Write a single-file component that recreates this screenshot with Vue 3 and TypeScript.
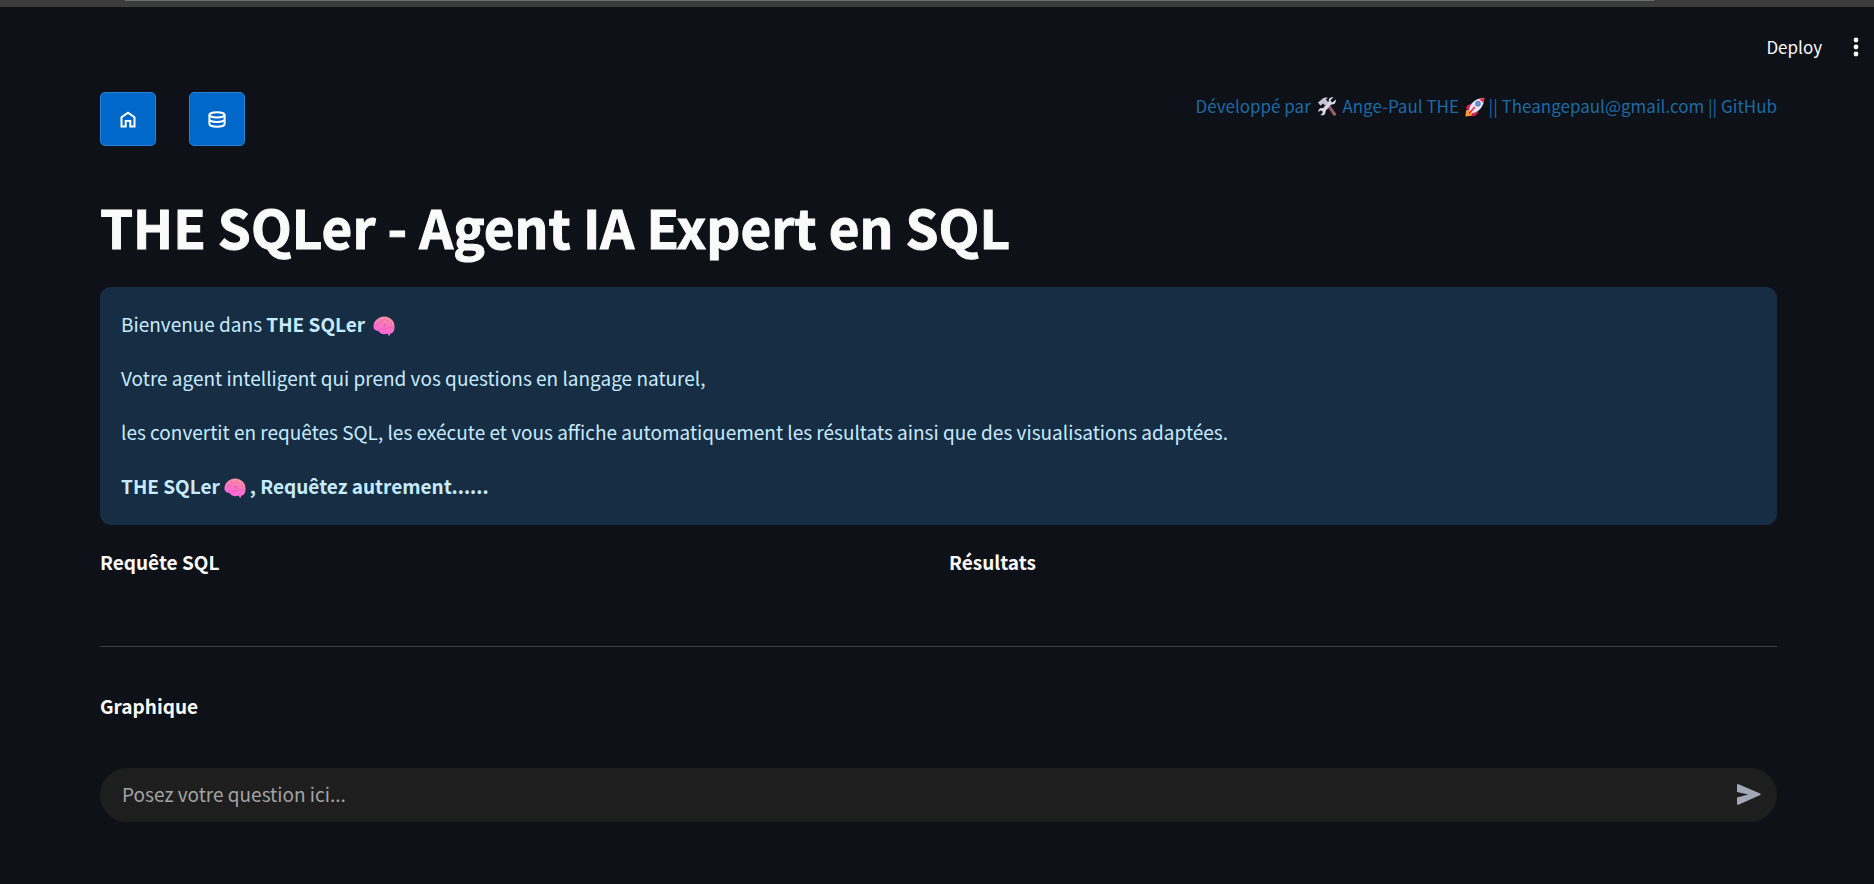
<script setup lang="ts">
import { ref } from 'vue'

const question = ref('')
</script>

<template>
  <div class="app">
    <svg class="defs" aria-hidden="true">
      <defs>
        <linearGradient id="brain-fill" x1="0.7" y1="0" x2="0.4" y2="1">
          <stop offset="0" stop-color="#ff9a9e" />
          <stop offset="0.55" stop-color="#fb72c6" />
          <stop offset="1" stop-color="#ff63e6" />
        </linearGradient>
        <linearGradient id="handle-fill" x1="0" y1="0" x2="1" y2="1">
          <stop offset="0" stop-color="#7c4f72" />
          <stop offset="1" stop-color="#a4645a" />
        </linearGradient>
        <symbol id="brain" viewBox="0 0 22 20">
          <path d="M.6 11.500C0 8 1.800 4.200 5 2.500 8 .2 12.500-.2 16 1.700c3.500 1.500 5.600 5 5.500 8.800.2 3.500-1.200 6.700-4.300 7.300l-.5 1.800c-.2.5-.8.4-1 0l-1.200-2c-3.500 1.200-7.500.4-8.900-2.600C3 15 1 13.800.6 11.500Z" fill="url(#brain-fill)" />
          <path d="M3 9c1.500-2 3.500-1 5-2.500M7 3.500c.5 1.500 2 2 3.500 1.500M12 2c-.5 2 1 3.500 3 3M10 8.500c2 1.500 4 .2 5-1M18 6c-1 1.500 0 3 1.500 3.500M5.500 14c2 .5 3-1.500 5-1s3 .2 4-1M15 11c1.500 1.500 3 1 4 0M11.500 8v3" fill="none" stroke="#d8549e" stroke-width=".6" stroke-linecap="round" />
        </symbol>
        <symbol id="tools" viewBox="0 0 20 20">
          <path d="M9 8l2.500-2L19 16.500c.8 1.400-1.200 3-2.500 2Z" fill="url(#handle-fill)" />
          <path d="M1 5.500 6.500 1l3-.7 1.300 1-2 .9 2.600 3.300-3.300 2.900L6 6.500 3.500 8.700Z" fill="#c9c4d6" />
          <path d="M18.700 2.500 15.800 5.200 14 4.800l-.4-1.700L16.400.6c-2.300-.9-5 .7-4.700 3.800L6 11.200c-2.600-.8-5 1-4.700 3.900l2.200-1.600 1.900.5.3 1.900-2.300 2c2.700 1.300 5.600-.7 5.100-4l5.700-6.500c3 .5 5.300-2 4.500-4.900Z" fill="#dcd8e8" />
        </symbol>
        <symbol id="rocket" viewBox="0 0 20 20">
          <path d="M1 13.500 5 12l3 3.500-1.500 3.200-6 .8Z" fill="#ff9b32" />
          <path d="M7 6.500 2.500 8.200C1.500 9.500 1.200 11 1.200 12.500L6 11.500ZM13.500 13l-1.200 4c-1.500 1.500-3.800 2.300-5.300 2.300l.5-5Z" fill="#d92354" />
          <path d="M4 13.500C5 6.500 9.500 1.300 19.300.7c-.2 9.500-6 14.500-12.700 15.500Z" fill="#e9e4f2" />
          <path d="M14.200 1.900 19.300.7c0 2.200-.4 4-1 5.400Z" fill="#ef2950" />
          <circle cx="13" cy="6.800" r="2.700" fill="#5d6aa8" />
          <circle cx="13" cy="6.800" r="1.800" fill="#4da9f5" />
          <path d="m9.500 10.500-5 5.300" stroke="#e62e57" stroke-width="1.800" stroke-linecap="round" />
        </symbol>
      </defs>
    </svg>

    <div class="browser-edge"><div class="edge-line"></div></div>

    <header class="toolbar">
      <button class="deploy" type="button">Deploy</button>
      <button class="menu" type="button" aria-label="Menu">
        <svg width="6" height="20" viewBox="0 0 6 20" fill="#fafafa">
          <circle cx="3" cy="3" r="2.400" />
          <circle cx="3" cy="10" r="2.400" />
          <circle cx="3" cy="17" r="2.400" />
        </svg>
      </button>
    </header>

    <main class="content">
      <div class="top">
        <nav class="nav">
          <button class="nav-button" type="button" aria-label="Accueil">
            <svg width="16" height="17" viewBox="0 0 16 17">
              <path d="M1.500 6.200 8 1.700l6.500 4.500v9.300h-4.200V10H5.700v5.500H1.500Z" fill="none" stroke="#fff" stroke-width="2" />
            </svg>
          </button>
          <button class="nav-button" type="button" aria-label="Base de données">
            <svg width="18" height="17" viewBox="0 0 18 17" fill="none" stroke="#fff" stroke-width="2">
              <ellipse cx="9" cy="3.800" rx="7.600" ry="2.600" />
              <path d="M1.400 3.800V13c0 1.600 3.400 2.800 7.600 2.800s7.600-1.200 7.600-2.800V3.800M1.400 8.300c0 1.500 3.400 2.700 7.600 2.700s7.600-1.200 7.600-2.700" />
            </svg>
          </button>
        </nav>
        <div class="credits">
          Développé par <svg class="small-emoji" role="img" aria-label="outils"><use href="#tools" /></svg>
          Ange-Paul THE <svg class="small-emoji rocket" role="img" aria-label="fusée"><use href="#rocket" /></svg>
          || <a href="mailto:Theangepaul@gmail.com">Theangepaul@gmail.com</a> || <a href="#github">GitHub</a>
        </div>
      </div>

      <h1>THE SQLer - Agent IA Expert en SQL</h1>

      <section class="info">
        <p>Bienvenue dans <strong>THE SQLer</strong> <svg class="emoji spaced" role="img" aria-label="cerveau"><use href="#brain" /></svg></p>
        <p>Votre agent intelligent qui prend vos questions en langage naturel,</p>
        <p>les convertit en requêtes SQL, les exécute et vous affiche automatiquement les résultats ainsi que des visualisations adaptées.</p>
        <p><strong>THE SQLer<svg class="emoji tight" role="img" aria-label="cerveau"><use href="#brain" /></svg>, Requêtez autrement......</strong></p>
      </section>

      <div class="columns">
        <h2>Requête SQL</h2>
        <h2>Résultats</h2>
      </div>

      <hr />

      <h2>Graphique</h2>

      <form class="chat" @submit.prevent>
        <input v-model="question" type="text" aria-label="Votre question" placeholder="Posez votre question ici..." />
        <button type="submit" aria-label="Envoyer">
          <svg width="24" height="21" viewBox="0 0 24 21">
            <path d="M1.500.2 23.200 9.600q1 .7 0 1.400L1.500 20.700Q0 21 0 19.700v-6.300l11.300-2.900L0 7.900V1.200Q0-.2 1.500.2Z" fill="#a3a8b8" />
          </svg>
        </button>
      </form>
    </main>
  </div>
</template>

<style>
body {
  margin: 0;
  background: #0e1117;
}
</style>

<style scoped>
.app {
  min-height: 100vh;
  background: #0e1117;
  color: #fafafa;
  font-family: "Source Sans Pro", "Noto Sans CJK JP", "Noto Sans", sans-serif;
  font-size: 19px;
  line-height: 32px;
}
.defs {
  position: absolute;
  width: 0;
  height: 0;
}
.browser-edge {
  height: 7px;
  background: #3c3c3c;
}
.edge-line {
  height: 1px;
  margin: 0 220px 0 125px;
  background: #6b6e6d;
}
button {
  padding: 0;
  border: 0;
  background: none;
  color: inherit;
  font: inherit;
  cursor: pointer;
}
.toolbar {
  display: flex;
  justify-content: flex-end;
  align-items: center;
  gap: 31px;
  height: 80px;
  padding-right: 15px;
}
.deploy {
  font-size: 17px;
}
.menu {
  display: flex;
}
.content {
  padding: 5px 97px 0 100px;
}
.top {
  display: flex;
  justify-content: space-between;
}
.nav {
  display: flex;
  gap: 33px;
}
.nav-button {
  display: flex;
  align-items: center;
  justify-content: center;
  width: 56px;
  height: 54px;
  border: 1px solid #2b82d4;
  border-radius: 5px;
  background: #0068c9;
}
.credits {
  color: #1c6ba5;
  font-size: 17px;
  line-height: 28px;
}
.credits a {
  color: inherit;
  text-decoration: none;
}
.small-emoji {
  width: 20px;
  height: 20px;
  margin: 0 2px;
  vertical-align: -4px;
}
.rocket {
  margin: 0 0 0 2px;
}
h1 {
  margin: 42px 0 22px;
  font-size: 53px;
  font-weight: 700;
  line-height: 77px;
  -webkit-text-stroke: 1px #fafafa;
}
.info {
  display: flex;
  flex-direction: column;
  gap: 22px;
  padding: 21px 21px 23px;
  border-radius: 11px;
  background: #172d43;
  color: #c7ebff;
}
p {
  margin: 0;
}
.emoji {
  width: 22px;
  height: 20px;
  vertical-align: -4px;
}
.spaced {
  margin-left: 4px;
}
.tight {
  margin: 0 4px;
}
h2 {
  margin: 0;
  font-size: 19px;
  font-weight: 700;
  line-height: 32px;
}
.columns {
  display: grid;
  grid-template-columns: 1fr 1fr;
  gap: 21px;
  margin-top: 21px;
}
hr {
  height: 1px;
  margin: 68px 0 43px;
  border: 0;
  background: #3f4146;
}
.chat {
  display: flex;
  align-items: center;
  box-sizing: border-box;
  height: 54px;
  margin-top: 46px;
  padding: 0 16px 2px 22px;
  border-radius: 27px;
  background: #1e1e1e;
}
.chat input {
  flex: 1;
  min-width: 0;
  height: 32px;
  padding: 0;
  border: 0;
  outline: 0;
  background: transparent;
  color: #fafafa;
  font: inherit;
}
.chat input::placeholder {
  color: #a3a3a3;
  opacity: 1;
}
.chat button {
  display: flex;
}
</style>
